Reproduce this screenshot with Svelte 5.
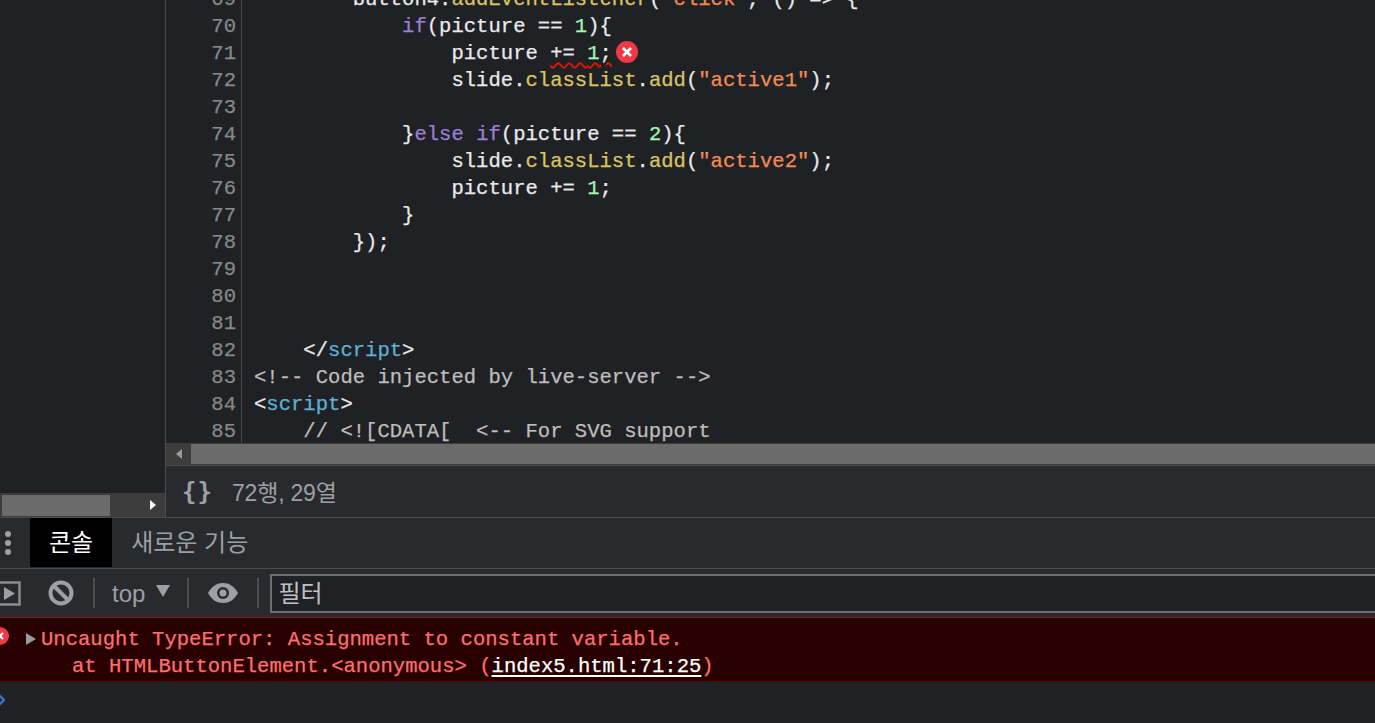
<script>
  const K = 'k', N = 'n', F = 'f', S = 's', T = 't', C = 'c';
  const lines = [
    [69, [['        button4.'], ['addEventListener', F], ['('], ['"click"', S], [', () => {']]],
    [70, [['            '], ['if', K], ['(picture == '], ['1', N], ['){']]],
    [71, [['                picture '], ['+= ', 'e'], ['1', 'en'], [';', 'e']]],
    [72, [['                slide.'], ['classList', F], ['.'], ['add', F], ['('], ['"active1"', S], [');']]],
    [73, []],
    [74, [['            }'], ['else', K], [' '], ['if', K], ['(picture == '], ['2', N], ['){']]],
    [75, [['                slide.'], ['classList', F], ['.'], ['add', F], ['('], ['"active2"', S], [');']]],
    [76, [['                picture += '], ['1', N], [';']]],
    [77, [['            }']]],
    [78, [['        });']]],
    [79, []],
    [80, []],
    [81, []],
    [82, [['    </'], ['script', T], ['>']]],
    [83, [['<!-- Code injected by live-server -->', C]]],
    [84, [['<'], ['script', T], ['>']]],
    [85, [['    // <![CDATA[  <-- For SVG support', C]]]
  ];
</script>

<div class="page">
  <div class="top">
    <aside class="nav">
      <div class="navspace"></div>
      <div class="navbar">
        <div class="navthumb"></div>
        <svg class="navarrow" width="8" height="12" viewBox="0 0 8 12"><path d="M1 1l6 5-6 5z" fill="#fff"/></svg>
      </div>
    </aside>
    <section class="editor">
      <div class="viewport">
        <div class="code">
          {#each lines as [no, parts]}
            <div class="line">
              <span class="no">{no}</span>
              <span class="src">{#each parts as [text, cls]}<span class={cls}>{text}</span>{/each}{#if no === 71}<span class="marker"><svg width="22" height="22" viewBox="0 0 22 22"><circle cx="11" cy="11" r="11" fill="#ee3a45"/><path d="M7 7l8 8M15 7l-8 8" stroke="#fff" stroke-width="2.6"/></svg></span>{/if}</span>
            </div>
          {/each}
        </div>
      </div>
      <div class="hbar">
        <div class="hbtn"><svg width="8" height="12" viewBox="0 0 8 12"><path d="M7 1L1 6l6 5z" fill="#9a9a9a"/></svg></div>
        <div class="hthumb"></div>
      </div>
      <div class="status">
        <span class="braces">{'{}'}</span>
        <span class="pos">72행, 29열</span>
      </div>
    </section>
  </div>

  <div class="tabs">
    <svg class="dots" width="8" height="26" viewBox="0 0 8 26"><circle cx="4" cy="4" r="3" fill="#9aa0a6"/><circle cx="4" cy="13" r="3" fill="#9aa0a6"/><circle cx="4" cy="22" r="3" fill="#9aa0a6"/></svg>
    <div class="tab active">콘솔</div>
    <div class="tab">새로운 기능</div>
  </div>

  <div class="toolbar">
    <svg class="play" width="21" height="25" viewBox="0 0 21 25"><path d="M0 1.500h19.500v22H0" fill="none" stroke="#8a8d90" stroke-width="2.500"/><path d="M4 6l11 6.500L4 19z" fill="#9aa0a6"/></svg>
    <svg class="block" width="26" height="26" viewBox="0 0 26 26"><circle cx="13" cy="13" r="10.500" fill="none" stroke="#9aa0a6" stroke-width="4"/><path d="M6 6l14 14" stroke="#9aa0a6" stroke-width="4"/></svg>
    <i class="sep"></i>
    <span class="top-label">top</span>
    <svg class="caret" width="14" height="12" viewBox="0 0 14 12"><path d="M0 0h14L7 12z" fill="#9aa0a6"/></svg>
    <i class="sep"></i>
    <svg class="eye" width="30" height="20" viewBox="0 0 30 20"><path d="M0 10C4 3 9 0 15 0s11 3 15 10c-4 7-9 10-15 10S4 17 0 10z" fill="#9aa0a6"/><circle cx="15" cy="10" r="6" fill="#292a2d"/><circle cx="15" cy="10" r="3.500" fill="#9aa0a6"/></svg>
    <i class="sep"></i>
    <div class="filter">필터</div>
  </div>

  <div class="error">
    <svg class="erricon" width="18" height="18" viewBox="0 0 18 18"><circle cx="9" cy="9" r="9" fill="#ee3a45"/><path d="M6 6l6 6M12 6l-6 6" stroke="#fff" stroke-width="2"/></svg>
    <svg class="tri" width="10" height="12" viewBox="0 0 10 12"><path d="M0 0l10 6-10 6z" fill="#9a9a9a"/></svg>
    <div class="msg">
      <div class="row">Uncaught TypeError: Assignment to constant variable.</div>
      <div class="row stack">at HTMLButtonElement.&lt;anonymous&gt; (<a href="#top">index5.html:71:25</a>)</div>
    </div>
  </div>

  <div class="prompt">
    <svg width="6" height="12" viewBox="0 0 6 12"><path d="M0 1l5 5-5 5" fill="none" stroke="#3b6fc0" stroke-width="2.500"/></svg>
  </div>
</div>

<style>
  :global(body) {
    margin: 0;
    background: #202124;
  }
  .page {
    width: 1375px;
    height: 723px;
    overflow: hidden;
    display: flex;
    flex-direction: column;
    background: #202124;
    font-family: "Liberation Sans", "Noto Sans CJK KR", sans-serif;
  }
  .top {
    display: flex;
    height: 517px;
    flex: none;
  }
  .nav {
    width: 165px;
    flex: none;
    display: flex;
    flex-direction: column;
    border-right: 1px solid #4a4c50;
  }
  .navspace { flex: 1; }
  .navbar {
    height: 24px;
    background: #3c3c3c;
    display: flex;
    align-items: center;
    justify-content: space-between;
    padding: 0 8px 0 2px;
  }
  .navthumb {
    width: 108px;
    height: 21px;
    background: #6b6b6b;
  }
  .navarrow { display: block; }
  .editor {
    flex: 1;
    min-width: 0;
    display: flex;
    flex-direction: column;
  }
  .viewport {
    height: 443px;
    overflow: hidden;
    flex: none;
  }
  .code {
    margin-top: -14px;
    font: 20.570px/27px "Liberation Mono", monospace;
    -webkit-text-stroke: 0.25px currentColor;
    color: #e8eaed;
  }
  .line {
    display: flex;
    height: 27px;
  }
  .no {
    width: 70px;
    padding-right: 5px;
    text-align: right;
    color: #85888c;
    border-right: 1px solid #45474b;
    flex: none;
    box-sizing: content-box;
  }
  .src {
    padding-left: 12px;
    white-space: pre;
    position: relative;
  }
  .k { color: #9a7fd5; }
  .n { color: #a1f7b5; }
  .f { color: #d9c565; }
  .s { color: #f28b54; }
  .t { color: #5db0d7; }
  .c { color: #bdbdbd; }
  .e {
    text-decoration: underline wavy #e51400 1.500px;
    text-underline-offset: 3px;
  }
  .en {
    color: #a1f7b5;
    text-decoration: underline wavy #e51400 1.500px;
    text-underline-offset: 3px;
  }
  .marker {
    display: inline-block;
    width: 22px;
    height: 22px;
    margin-left: 4px;
    vertical-align: -4px;
  }
  .marker svg { display: block; }
  .hbar {
    height: 23px;
    flex: none;
    display: flex;
    align-items: center;
    background: #3c3c3c;
    border-bottom: 1px solid #4a4c50;
    box-sizing: border-box;
  }
  .hbtn {
    width: 25px;
    display: flex;
    justify-content: center;
  }
  .hthumb {
    flex: 1;
    height: 20px;
    background: #6b6b6b;
  }
  .status {
    flex: 1;
    background: #292a2d;
    display: flex;
    align-items: center;
    color: #9aa0a6;
    font-size: 23px;
  }
  .braces {
    margin-left: 16px;
    width: 50px;
    font: bold 24px "DejaVu Sans Mono", monospace;
    letter-spacing: 1px;
  }
  .pos {
    letter-spacing: -0.2px;
    padding-bottom: 2px;
  }
  .tabs {
    height: 52px;
    flex: none;
    box-sizing: border-box;
    display: flex;
    align-items: stretch;
    background: #292a2d;
    border-top: 1px solid #4a4c50;
    border-bottom: 1px solid #4a4c50;
  }
  .dots {
    margin: 12px 0 0 4px;
    flex: none;
  }
  .tab {
    display: flex;
    align-items: center;
    padding: 0 19px 5px;
    font-size: 24px;
    white-space: nowrap;
    color: #9aa0a6;
  }
  .tab.active {
    margin-left: 18px;
    background: #000;
    color: #fff;
    height: 44px;
  }
  .toolbar {
    height: 48px;
    flex: none;
    display: flex;
    align-items: center;
    background: #292a2d;
    box-sizing: border-box;
    color: #9aa0a6;
  }
  .play { flex: none; }
  .block {
    flex: none;
    margin-left: 27px;
  }
  .sep {
    width: 2px;
    height: 30px;
    background: #4a4c50;
    flex: none;
    margin-left: 19px;
  }
  .top-label {
    font-size: 24px;
    margin-left: 17px;
    padding-top: 2px;
  }
  .caret {
    margin: -4px 0 0 11px;
    flex: none;
  }
  .caret + .sep { margin-left: 17px; }
  .eye {
    margin-left: 19px;
    flex: none;
  }
  .eye + .sep { margin-left: 19px; }
  .filter {
    margin-left: 11px;
    flex: 1;
    height: 39px;
    box-sizing: border-box;
    border: 2px solid #6b6e72;
    border-right: none;
    background: #202124;
    color: #bdc1c6;
    font-size: 24px;
    line-height: 35px;
    padding-left: 6px;
  }
  .error {
    height: 65px;
    flex: none;
    box-sizing: border-box;
    background: #290000;
    border-top: 1px solid #8b1a1a;
    border-bottom: 1px solid #5c0000;
    display: flex;
    position: relative;
    font: 20.570px/27px "Liberation Mono", monospace;
    -webkit-text-stroke: 0.25px currentColor;
    color: #ff6e6e;
  }
  .erricon {
    position: absolute;
    left: -9px;
    top: 9px;
  }
  .tri {
    margin: 15px 0 0 26px;
    flex: none;
  }
  .msg { margin: 8px 0 0 5px; }
  .row { white-space: pre; }
  .stack { padding-left: 31px; }
  .stack a {
    color: #fff;
    text-decoration: underline 2px;
    text-underline-offset: 3px;
  }
  .prompt {
    flex: 1;
    display: flex;
    align-items: center;
    padding-bottom: 5px;
  }
  .prompt svg { margin-left: -1px; }
</style>
